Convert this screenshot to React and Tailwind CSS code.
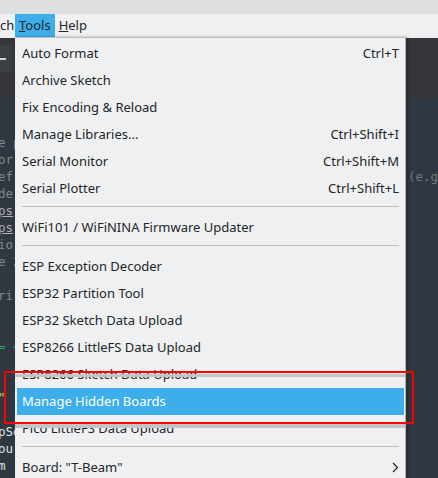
import React from 'react';

const menuItems = [
  { label: 'Auto Format', shortcut: 'Ctrl+T' },
  { label: 'Archive Sketch' },
  { label: 'Fix Encoding & Reload' },
  { label: 'Manage Libraries...', shortcut: 'Ctrl+Shift+I' },
  { label: 'Serial Monitor', shortcut: 'Ctrl+Shift+M' },
  { label: 'Serial Plotter', shortcut: 'Ctrl+Shift+L' },
  'sep',
  { label: 'WiFi101 / WiFiNINA Firmware Updater' },
  'sep',
  { label: 'ESP Exception Decoder' },
  { label: 'ESP32 Partition Tool' },
  { label: 'ESP32 Sketch Data Upload' },
  { label: 'ESP8266 LittleFS Data Upload' },
  { label: 'ESP8266 Sketch Data Upload' },
  { label: 'Manage Hidden Boards', active: true },
  { label: 'Pico LittleFS Data Upload' },
  'sep',
  { label: 'Board: "T-Beam"', submenu: true },
];

// what peeks out of the editor left of the menu
const codeLines = [
  { t: '' },
  { t: '' },
  { t: 'e p' },
  { t: 'or' },
  { t: 'ef', right: '(e.g' },
  { t: 'de' },
  { t: 'ps', link: true },
  { t: 'ps', link: true },
  { t: 'io' },
  { t: 'e 2' },
  { t: '' },
  { t: 'ri' },
  { t: '' },
  { t: '' },
  { t: '= <', green: true },
  { t: '' },
  { t: '' },
  { t: '" "', str: true },
  { t: '' },
  { t: 'pSo', light: true },
  { t: 'ou', light: true },
  { t: 'm', light: true },
];

function Chevron() {
  return (
    <svg width="7" height="11" viewBox="0 0 7 11" fill="none">
      <path d="M1 1l4.5 4.5L1 10" stroke="#232629" strokeWidth="1.2" />
    </svg>
  );
}

export default function App() {
  return (
    <div className="relative w-[438px] h-[478px] overflow-hidden bg-[#2f3841] font-['Noto_Sans',sans-serif]">
      {/* window title strip */}
      <div className="h-[14px] bg-[#dedfe1]" />

      {/* menu bar */}
      <div className="h-[24px] bg-[#eff0f1] flex items-stretch text-[13px] text-[#232629]">
        <div className="flex items-center w-[15px] overflow-hidden">ch</div>
        <div className="flex items-center px-[4px] bg-[#3daee9] h-[23px]">
          <span><span className="underline">T</span>ools</span>
        </div>
        <div className="flex items-center px-[4px]">
          <span><span className="underline">H</span>elp</span>
        </div>
      </div>

      {/* toolbar */}
      <div className="h-[60px] bg-[#343639] pt-[7px]">
        <div className="w-[11px] h-[27px] bg-[#3c3f43] flex items-center">
          <div className="w-[6px] h-[2px] bg-[#d0d2d4]" />
        </div>
      </div>

      {/* editor */}
      <div className="pt-[2px] font-['DejaVu_Sans_Mono',monospace] text-[12.5px] leading-[17px] text-[#7f878f]">
        {codeLines.map((l, i) => (
          <div key={i} className="flex h-[17px] whitespace-pre -ml-[2px]">
            <span
              className={
                l.link
                  ? 'text-[#aab0b6] underline'
                  : l.green
                  ? 'text-[#27ae60]'
                  : l.str
                  ? 'text-[#b8c46a]'
                  : l.light
                  ? 'text-[#dfe2e5]'
                  : ''
              }
            >
              {l.t}
            </span>
            {l.right && <span className="ml-auto text-[#6f7880]">{l.right}</span>}
          </div>
        ))}
      </div>

      {/* Tools dropdown */}
      <div className="absolute left-[15px] top-[37px] w-[391px] h-[460px] bg-[#eff0f1] border-t border-t-[#bcbebf] border-r border-r-[#b2b4b6] pt-[2px] pl-[2px] pr-[1px] text-[13px] text-[#232629] shadow-[2px_0_3px_rgba(0,0,0,0.25)]">
        {menuItems.map((it, i) =>
          it === 'sep' ? (
            <div key={i} className="h-[12px] pt-[4px] px-[5px]">
              <div className="h-px bg-[#bdbec0]" />
            </div>
          ) : (
            <div
              key={i}
              className={
                'h-[27px] flex items-center justify-between pl-[5px] pr-[5px] ' +
                (it.active ? 'bg-[#3daee9] text-white' : '')
              }
            >
              <span>{it.label}</span>
              {it.shortcut && <span>{it.shortcut}</span>}
              {it.submenu && <Chevron />}
            </div>
          )
        )}
        <div className="absolute left-0 right-0 top-[336px] h-[3px] bg-[#c3c4c6]" />
        <div className="absolute left-0 right-0 top-[386px] h-[4px] bg-[#c3c4c6]" />
      </div>

      {/* annotation box */}
      <div className="absolute left-[4px] top-[371px] w-[410px] h-[53px] border-2 border-[#ff0000]" />
    </div>
  );
}
